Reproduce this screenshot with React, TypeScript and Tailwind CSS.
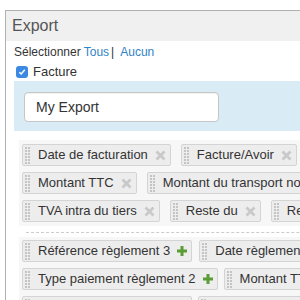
import React from "react";

const FONT = { fontFamily: '"Liberation Sans", Arial, sans-serif' };

function Handle() {
  const dots: React.ReactNode[] = [];
  for (let r = 0; r < 6; r++) {
    for (let c = 0; c < 2; c++) {
      dots.push(<rect key={`${r}-${c}`} x={c * 3} y={r * 3} width="2" height="2" fill="#c4c4c4" />);
    }
  }
  return (
    <svg width="5" height="17" viewBox="0 0 5 17" className="shrink-0">
      {dots}
    </svg>
  );
}

function XIcon() {
  return (
    <svg width="11" height="11" viewBox="0 0 11 11" className="ml-[7px] shrink-0">
      <path d="M1.5 1.5 L9.5 9.5 M9.5 1.5 L1.5 9.5" stroke="#c9c9c9" strokeWidth="2.8" strokeLinecap="butt" />
    </svg>
  );
}

function PlusIcon() {
  return (
    <svg width="10" height="10" viewBox="0 0 10 10" className="ml-[7px] shrink-0">
      <rect x="3.5" y="0" width="3" height="10" fill="#5a9c36" />
      <rect x="0" y="3.5" width="10" height="3" fill="#5a9c36" />
    </svg>
  );
}

function Chip({ label, icon }: { label: string; icon: "x" | "plus" }) {
  return (
    <div className="flex h-[22px] shrink-0 items-center whitespace-nowrap rounded-[2px] border border-[#d4d4d4] bg-[#ededed] pl-[2px] pr-[4px]">
      <Handle />
      <span className="ml-[8px] text-[13px] leading-[16px] text-[#333]">{label}</span>
      {icon === "x" ? <XIcon /> : <PlusIcon />}
    </div>
  );
}

export default function App() {
  return (
    <div className="relative h-[300px] w-[300px] overflow-hidden bg-white" style={FONT}>
      <div className="ml-[5px] mt-[10px] w-[800px] border-l border-t border-[#b0b0b0]">
        <div className="flex h-[30px] items-center bg-[#f0f0f0] pl-[6px] text-[16px] text-[#555]">Export</div>
        <div className="pl-[8px]">
          <div className="mt-[3px] flex h-[16px] items-center text-[12px] text-[#333]">
            <span>Sélectionner</span>
            <span className="ml-[3px] text-[#2f83c6]">Tous</span>
            <span className="ml-[2px]">|</span>
            <span className="ml-[6px] text-[#2f83c6]">Aucun</span>
          </div>
          <div className="mt-[4px] flex h-[16px] items-center">
            <span className="ml-[2px] flex h-[12px] w-[12px] items-center justify-center rounded-[3px] bg-[#3b89e3]">
              <svg width="8" height="8" viewBox="0 0 8 8">
                <path d="M1.3 4.2 L3.2 6 L6.8 1.8" stroke="white" strokeWidth="1.5" fill="none" />
              </svg>
            </span>
            <span className="ml-[5px] text-[13px] text-[#333]">Facture</span>
          </div>
        </div>
        <div className="ml-[8px] mt-[1px] h-[50px] bg-[#d9ebf5] pl-[10px] pt-[11px]">
          <div className="flex h-[30px] w-[195px] items-center rounded-[4px] border border-[#c6c6c6] bg-white pl-[11px] text-[14px] text-[#333] shadow-[inset_0_1px_1px_rgba(0,0,0,0.06)]">
            My Export
          </div>
        </div>
        <div className="ml-[13px] mt-[9px] flex flex-col gap-[6px] bg-[#f7f7f7] pb-[4px] pl-[3px] pt-[4px]">
          <div className="flex gap-[10px]">
            <Chip label="Date de facturation" icon="x" />
            <Chip label="Facture/Avoir" icon="x" />
          </div>
          <div className="flex gap-[10px]">
            <Chip label="Montant TTC" icon="x" />
            <Chip label="Montant du transport non soumis" icon="x" />
          </div>
          <div className="flex gap-[10px]">
            <Chip label="TVA intra du tiers" icon="x" />
            <Chip label="Reste du" icon="x" />
            <Chip label="Remise" icon="x" />
          </div>
        </div>
        <div className="ml-[20px] mt-[6px] border-t border-dashed border-[#cccccc]" />
        <div className="ml-[13px] mt-[4px] flex flex-col gap-[6px] bg-[#f7f7f7] pl-[3px] pt-[3px]">
          <div className="flex gap-[7px]">
            <Chip label="Référence règlement 3" icon="plus" />
            <Chip label="Date règlement 3" icon="plus" />
          </div>
          <div className="flex gap-[6px]">
            <Chip label="Type paiement règlement 2" icon="plus" />
            <Chip label="Montant TTC règlement 2" icon="plus" />
          </div>
          <div className="flex gap-[6px]">
            <Chip label="Référence règlement 2" icon="plus" />
            <Chip label="Date règlement 2" icon="plus" />
          </div>
        </div>
      </div>
    </div>
  );
}
